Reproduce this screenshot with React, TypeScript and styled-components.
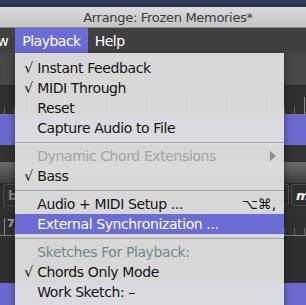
import React from 'react';
import styled, { createGlobalStyle } from 'styled-components';

const GlobalStyle = createGlobalStyle`
  html, body {
    margin: 0;
    padding: 0;
    background: #2f2f2f;
  }
  body {
    font-family: "DejaVu Sans", "Lucida Grande", sans-serif;
  }
  * {
    box-sizing: border-box;
  }
`;

const Window = styled.div`
  width: 306px;
  height: 305px;
  overflow: hidden;
  display: flex;
  flex-direction: column;
`;

const TopStrip = styled.div`
  flex: none;
  height: 7px;
  background: linear-gradient(#34405e, #262f48);
`;

const TitleBar = styled.div`
  flex: none;
  height: 21px;
  padding-left: 30px;
  display: flex;
  align-items: center;
  justify-content: center;
  background: linear-gradient(#dcdcdc, #c3c3c3);
  border-bottom: 1px solid #8a8a8a;
  color: #3a3a3a;
  font-size: 13px;
  letter-spacing: -0.3px;
  white-space: nowrap;
`;

const MenuBar = styled.div`
  flex: none;
  height: 25px;
  display: flex;
  align-items: stretch;
  background: #404040;
  position: relative;
  z-index: 2;
`;

const MenuTitle = styled.div<{ $open?: boolean; $shift?: number }>`
  position: relative;
  display: flex;
  align-items: center;
  padding: 0 7px;
  margin-left: ${(p) => p.$shift ?? 0}px;
  color: #ffffff;
  font-size: 14px;
  letter-spacing: -0.5px;
  background: ${(p) => (p.$open ? '#6c6cd6' : 'transparent')};
  white-space: nowrap;
`;

const Dropdown = styled.div`
  position: absolute;
  top: 100%;
  left: 0;
  width: 269px;
  padding: 5px 0;
  background: rgba(224, 224, 224, 0.95);
  box-shadow: 0 3px 8px rgba(0, 0, 0, 0.45);
  letter-spacing: -0.4px;
  color: #141414;
  font-size: 14px;
`;

const Item = styled.div<{ $active?: boolean; $disabled?: boolean; $heading?: boolean }>`
  height: 20px;
  display: flex;
  align-items: center;
  padding: 0 8px 0 9px;
  background: ${(p) => (p.$active ? '#6c6cd6' : 'transparent')};
  color: ${(p) =>
    p.$active ? '#ffffff' : p.$disabled ? '#a4a4a4' : p.$heading ? '#6f8889' : '#141414'};
`;

const Check = styled.span`
  width: 13px;
  flex: none;
`;

const Label = styled.span`
  flex: 1;
  white-space: nowrap;
`;

const Shortcut = styled.span`
  flex: none;
  letter-spacing: 0;
`;

const SubArrow = styled.span`
  flex: none;
  width: 0;
  height: 0;
  border-top: 5px solid transparent;
  border-bottom: 5px solid transparent;
  border-left: 6px solid #8c8c8c;
`;

const Separator = styled.div`
  height: 8px;
  display: flex;
  align-items: center;

  &::after {
    content: '';
    flex: 1;
    height: 1px;
    background: #a3a3a3;
  }
`;

const Toolbar = styled.div`
  flex: none;
  height: 34px;
  background: #474747;
  border-bottom: 2px solid #2a2a2a;
`;

const Ruler = styled.div<{ $height: number; $offset: number }>`
  flex: none;
  height: ${(p) => p.$height}px;
  display: flex;
  padding-left: ${(p) => p.$offset}px;
  background-color: #303030;
  background-image: repeating-linear-gradient(to right, #626262 0 1px, transparent 1px 10px);
  background-size: 100% 7px;
  background-position: 4px bottom;
  background-repeat: no-repeat;
  border-bottom: 1px solid #7c7c7c;
  overflow: hidden;
`;

const BarMark = styled.div<{ $width: number }>`
  flex: none;
  width: ${(p) => p.$width}px;
  display: flex;
  align-items: flex-end;
  padding: 0 0 5px 3px;
  background: linear-gradient(#8a8a8a, #8a8a8a) no-repeat left bottom / 1px 17px;
  color: #a9a9a9;
  font-size: 11px;
  font-weight: bold;
`;

const Track = styled.div<{ $height: number }>`
  flex: none;
  height: ${(p) => p.$height}px;
  background: #6b6bcf;
`;

const Gap = styled.div<{ $height: number }>`
  flex: none;
  height: ${(p) => p.$height}px;
  background: #333333;
`;

const TrackHeader = styled.div`
  flex: none;
  height: 21px;
  background: linear-gradient(#6c6c6c, #3d3d3d);
`;

const CellRow = styled.div`
  flex: none;
  height: 24px;
  display: flex;
  gap: 2px;
  padding: 1px 0 1px 3px;
  background: #2c2c2c;
  margin-right: -25px;
`;

const Cell = styled.div<{ $width?: number; $italic?: boolean }>`
  flex: ${(p) => (p.$width ? 'none' : '1')};
  width: ${(p) => (p.$width ? `${p.$width}px` : 'auto')};
  display: flex;
  align-items: center;
  padding-left: 4px;
  border: 1px solid #4e4e4e;
  border-radius: 2px;
  background: #303030;
  color: ${(p) => (p.$italic ? '#f2f2f2' : '#8c8c8c')};
  font-size: 13px;
  font-weight: bold;
  font-style: ${(p) => (p.$italic ? 'italic' : 'normal')};
`;

const Content = styled.div`
  flex: none;
  height: 47px;
  background: #2f2f2f;
`;

// bar labels hidden under the menu are left out
const upperBars = ['', '', '', '', '', '', '', ''];
const lowerBars = ['7', '', '', ''];

const App = () => (
  <>
    <GlobalStyle />
    <Window>
      <TopStrip />
      <TitleBar>Arrange: Frozen Memories*</TitleBar>
      <MenuBar>
        <MenuTitle $shift={-30}>View</MenuTitle>
        <MenuTitle $open>
          Playback
          <Dropdown>
            <Item>
              <Check>√</Check>
              <Label>Instant Feedback</Label>
            </Item>
            <Item>
              <Check>√</Check>
              <Label>MIDI Through</Label>
            </Item>
            <Item>
              <Check />
              <Label>Reset</Label>
            </Item>
            <Item>
              <Check />
              <Label>Capture Audio to File</Label>
            </Item>
            <Separator />
            <Item $disabled>
              <Check />
              <Label>Dynamic Chord Extensions</Label>
              <SubArrow />
            </Item>
            <Item>
              <Check>√</Check>
              <Label>Bass</Label>
            </Item>
            <Separator />
            <Item>
              <Check />
              <Label>Audio + MIDI Setup ...</Label>
              <Shortcut>⌥⌘,</Shortcut>
            </Item>
            <Item $active>
              <Check />
              <Label>External Synchronization ...</Label>
            </Item>
            <Separator />
            <Item $heading>
              <Check />
              <Label>Sketches For Playback:</Label>
            </Item>
            <Item>
              <Check>√</Check>
              <Label>Chords Only Mode</Label>
            </Item>
            <Item>
              <Check />
              <Label>Work Sketch: –</Label>
            </Item>
          </Dropdown>
        </MenuTitle>
        <MenuTitle>Help</MenuTitle>
      </MenuBar>
      <Toolbar />
      <Ruler $height={28} $offset={24}>
        {upperBars.map((label, i) => (
          <BarMark key={i} $width={40}>
            {label}
          </BarMark>
        ))}
      </Ruler>
      <Track $height={30} />
      <Gap $height={17} />
      <TrackHeader />
      <CellRow>
        <Cell $width={60}>b</Cell>
        <Cell />
        <Cell $width={40} $italic>
          mi
        </Cell>
      </CellRow>
      <Gap $height={3} />
      <Ruler $height={26} $offset={4}>
        {lowerBars.map((label, i) => (
          <BarMark key={i} $width={80}>
            {label}
          </BarMark>
        ))}
      </Ruler>
      <Content />
      <Track $height={22} />
    </Window>
  </>
);

export default App;
